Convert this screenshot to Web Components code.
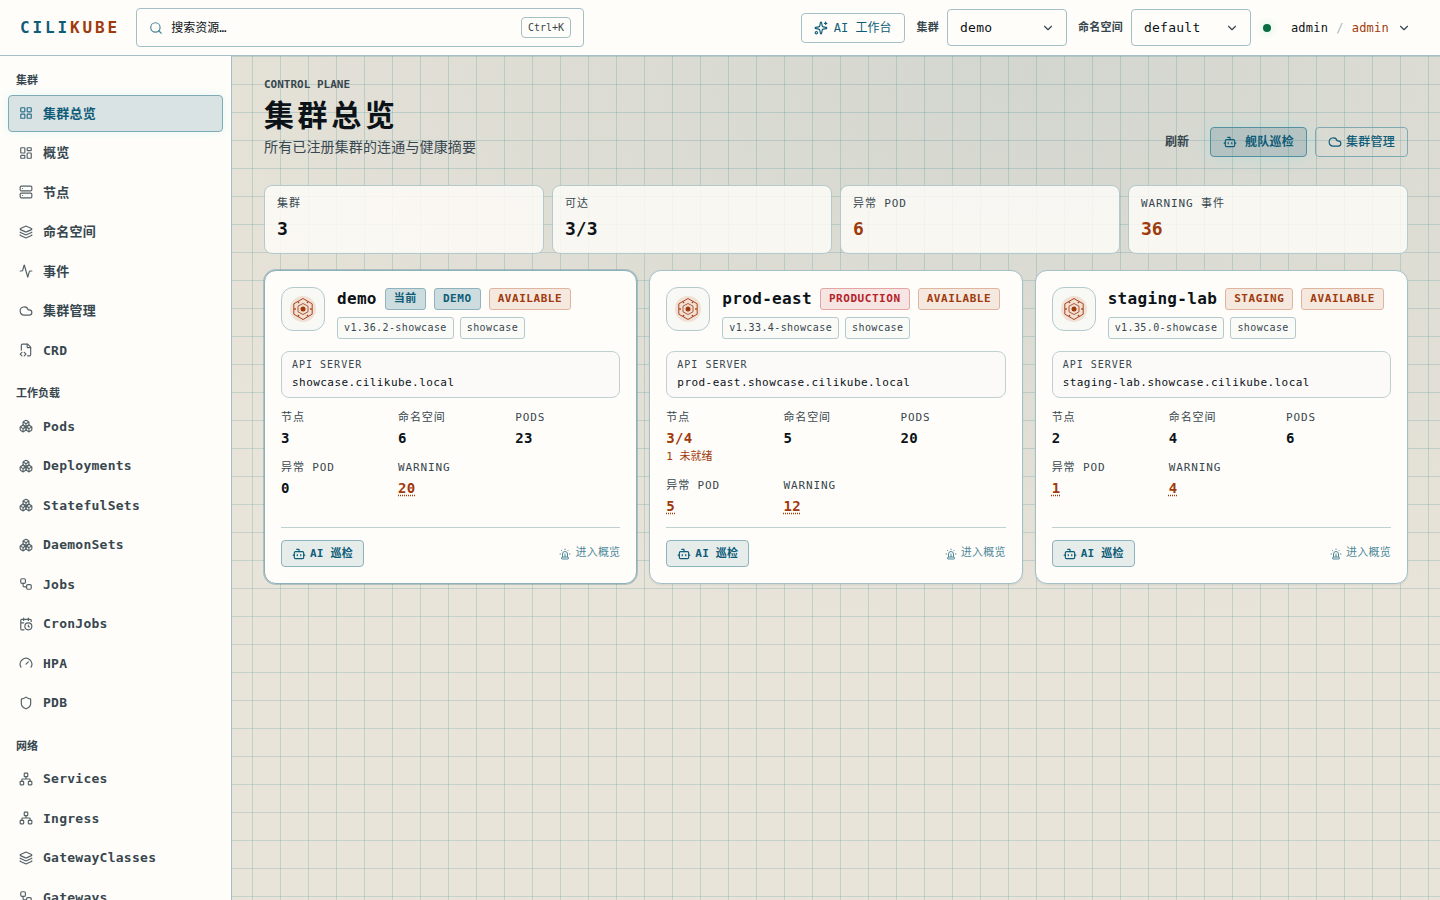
<!DOCTYPE html>
<html lang="zh-CN">
<head>
<meta charset="utf-8">
<title>CiliKube · 集群总览</title>
<meta name="viewport" content="width=device-width, initial-scale=1">
<style>
:root {
  --teal: #0e5c78;
  --rust: #9f3a0c;
  --red: #b4232a;
  --ink: #0b1218;
  --body: #37474f;
  --paper: #fffdf9;
  --line: #a3c0c7;
  --line-soft: #c0d0d2;
}
* { box-sizing: border-box; }
body {
  margin: 0;
  min-height: 100vh;
  font: 12px/1.5 "DejaVu Sans Mono", "Noto Sans CJK SC", monospace;
  color: var(--ink);
  background:
    linear-gradient(rgba(14, 110, 125, .17) 1px, transparent 1px) 0 0 / 28px 28px,
    linear-gradient(90deg, rgba(14, 110, 125, .17) 1px, transparent 1px) 0 0 / 28px 28px,
    radial-gradient(ellipse 70% 64% at 72% 8%, rgba(14, 92, 120, .1), transparent) no-repeat,
    #e9e4d9;
}
</style>
</head>
<body>
<cili-app></cili-app>

<script>
const BASE = '*{box-sizing:border-box}button,input,select{font:inherit;color:inherit;margin:0}a{color:inherit;text-decoration:none}';

class Base extends HTMLElement {
  connectedCallback() {
    if (this.shadowRoot) return;
    this.attachShadow({ mode: 'open' }).innerHTML = `<style>${BASE}${this.css()}</style>${this.html()}`;
  }
  attr(name) { return this.getAttribute(name) || ''; }
  css() { return ':host{display:block}'; }
  html() { return '<slot></slot>'; }
}

const ICONS = {
  search: '<circle cx="11" cy="11" r="8"/><path d="m21 21-4.3-4.3"/>',
  down: '<path d="m6 9 6 6 6-6"/>',
  sparkles: '<path d="M11.017 2.814a1 1 0 0 1 1.966 0l1.051 5.558a2 2 0 0 0 1.594 1.594l5.558 1.051a1 1 0 0 1 0 1.966l-5.558 1.051a2 2 0 0 0-1.594 1.594l-1.051 5.558a1 1 0 0 1-1.966 0l-1.051-5.558a2 2 0 0 0-1.594-1.594l-5.558-1.051a1 1 0 0 1 0-1.966l5.558-1.051a2 2 0 0 0 1.594-1.594z"/><path d="M20 2v4M22 4h-4"/><circle cx="4" cy="20" r="2"/>',
  grid: '<rect width="7" height="7" x="3" y="3" rx="1"/><rect width="7" height="7" x="14" y="3" rx="1"/><rect width="7" height="7" x="14" y="14" rx="1"/><rect width="7" height="7" x="3" y="14" rx="1"/>',
  dashboard: '<rect width="7" height="9" x="3" y="3" rx="1"/><rect width="7" height="5" x="14" y="3" rx="1"/><rect width="7" height="9" x="14" y="12" rx="1"/><rect width="7" height="5" x="3" y="16" rx="1"/>',
  server: '<rect width="20" height="8" x="2" y="2" rx="2"/><rect width="20" height="8" x="2" y="14" rx="2"/><path d="M6 6h.01M6 18h.01"/>',
  layers: '<path d="M12.83 2.18a2 2 0 0 0-1.66 0L2.6 6.08a1 1 0 0 0 0 1.83l8.58 3.91a2 2 0 0 0 1.66 0l8.58-3.9a1 1 0 0 0 0-1.83z"/><path d="M2 12a1 1 0 0 0 .58.91l8.6 3.91a2 2 0 0 0 1.65 0l8.58-3.9A1 1 0 0 0 22 12"/><path d="M2 17a1 1 0 0 0 .58.91l8.6 3.91a2 2 0 0 0 1.65 0l8.58-3.9A1 1 0 0 0 22 17"/>',
  activity: '<path d="M22 12h-2.48a2 2 0 0 0-1.93 1.46l-2.35 8.36a.25.25 0 0 1-.48 0L9.24 2.18a.25.25 0 0 0-.48 0l-2.35 8.36A2 2 0 0 1 4.49 12H2"/>',
  cloud: '<path d="M17.5 19H9a7 7 0 1 1 6.71-9h1.79a4.5 4.5 0 1 1 0 9Z"/>',
  filecode: '<path d="M4 12.15V4a2 2 0 0 1 2-2h8a2.4 2.4 0 0 1 1.706.706l3.588 3.588A2.4 2.4 0 0 1 20 8v12a2 2 0 0 1-2 2h-3.35"/><path d="M14 2v5a1 1 0 0 0 1 1h5"/><path d="m5 16-3 3 3 3M9 22l3-3-3-3"/>',
  boxes: '<path d="M2.97 12.92A2 2 0 0 0 2 14.63v3.24a2 2 0 0 0 .97 1.71l3 1.8a2 2 0 0 0 2.06 0L12 19v-5.5l-5-3-4.03 2.42Z"/><path d="m7 16.5-4.74-2.85M7 16.5l5-3M7 16.5v5.17"/><path d="M12 13.5V19l3.97 2.38a2 2 0 0 0 2.06 0l3-1.8a2 2 0 0 0 .97-1.71v-3.24a2 2 0 0 0-.97-1.71L17 10.5l-5 3Z"/><path d="m17 16.5-5-3M17 16.5l4.74-2.85M17 16.5v5.17"/><path d="M7.97 4.42A2 2 0 0 0 7 6.13v4.37l5 3 5-3V6.13a2 2 0 0 0-.97-1.71l-3-1.8a2 2 0 0 0-2.06 0l-3 1.8Z"/><path d="M12 8 7.26 5.15M12 8l4.74-2.85M12 13.5V8"/>',
  workflow: '<rect width="8" height="8" x="3" y="3" rx="2"/><path d="M7 11v4a2 2 0 0 0 2 2h4"/><rect width="8" height="8" x="13" y="13" rx="2"/>',
  calendar: '<path d="M16 14v2.2l1.6 1M16 2v4"/><path d="M21 7.5V6a2 2 0 0 0-2-2H5a2 2 0 0 0-2 2v14a2 2 0 0 0 2 2h3.5M3 10h5M8 2v4"/><circle cx="16" cy="16" r="6"/>',
  gauge: '<path d="m12 14 4-4M3.34 19a10 10 0 1 1 17.32 0"/>',
  shield: '<path d="M20 13c0 5-3.5 7.5-7.66 8.95a1 1 0 0 1-.67-.01C7.5 20.5 4 18 4 13V6a1 1 0 0 1 1-1c2 0 4.5-1.2 6.24-2.72a1.17 1.17 0 0 1 1.52 0C14.51 3.81 17 5 19 5a1 1 0 0 1 1 1z"/>',
  network: '<rect x="16" y="16" width="6" height="6" rx="1"/><rect x="2" y="16" width="6" height="6" rx="1"/><rect x="9" y="2" width="6" height="6" rx="1"/><path d="M5 16v-3a1 1 0 0 1 1-1h12a1 1 0 0 1 1 1v3M12 12V8"/>',
  bot: '<path d="M12 8V4H8"/><rect width="16" height="12" x="4" y="8" rx="2"/><path d="M2 14h2M20 14h2M15 13v2M9 13v2"/>',
  siren: '<path d="M7 18v-6a5 5 0 1 1 10 0v6"/><path d="M5 21a1 1 0 0 0 1 1h12a1 1 0 0 0 1-1v-1a2 2 0 0 0-2-2H7a2 2 0 0 0-2 2z"/><path d="M21 12h1M18.5 4.5 18 5M2 12h1M12 2v1M4.929 4.929l.707.707M12 12v6"/>'
};

customElements.define('ui-icon', class extends Base {
  css() { return ':host{display:block;flex:none;width:14px;height:14px}svg{display:block;width:100%;height:100%}'; }
  html() {
    return `<svg viewBox="0 0 24 24" fill="none" stroke="currentColor" stroke-width="${this.attr('weight') || 2}" stroke-linecap="round" stroke-linejoin="round" aria-hidden="true">${ICONS[this.attr('name')]}</svg>`;
  }
});

customElements.define('ui-button', class extends Base {
  css() {
    return `:host{display:block}
    button{display:flex;align-items:center;justify-content:center;gap:6px;height:30px;padding:0 12px;border:1px solid #7fa9b3;border-radius:4px;background:none;color:var(--teal);font-size:12px;line-height:18px;white-space:nowrap}
    .plain{border-color:transparent;color:var(--body);font-weight:700}
    .primary{background:rgba(14,92,120,.18);border-color:#5590a0;font-weight:700;gap:8px;letter-spacing:.02em;box-shadow:0 0 16px rgba(120,225,230,.28)}
    .outline{gap:4px;font-weight:500;letter-spacing:.02em}
    .soft{height:27px;padding:0 10px;gap:4px;font-size:11px;font-weight:700;letter-spacing:.02em;background:#e6ecea;border-color:#8fb3bd}
    .top{border-color:var(--line)}`;
  }
  html() { return `<button type="button" class="${this.attr('kind')}"><slot></slot></button>`; }
});

customElements.define('ui-select', class extends Base {
  css() {
    return `:host{display:flex;align-items:center;gap:8px}
    label{padding-top:2px;font-size:11px;font-weight:700;letter-spacing:.02em;color:var(--body);white-space:nowrap}
    .box{position:relative;display:flex;align-items:center}
    select{appearance:none;width:120px;height:37px;padding:0 36px 0 12px;border:1px solid var(--line);border-radius:4px;background:var(--paper);font-size:13px;letter-spacing:.02em;color:var(--ink)}
    ui-icon{position:absolute;right:12px;color:var(--body);pointer-events:none}`;
  }
  html() {
    return `<label for="s">${this.attr('label')}</label><div class="box"><select id="s"><option>${this.attr('value')}</option></select><ui-icon name="down"></ui-icon></div>`;
  }
});

customElements.define('app-topbar', class extends Base {
  css() {
    return `:host{position:sticky;top:0;z-index:2;display:flex;align-items:center;height:56px;padding:0 29px 0 20px;background:var(--paper);border-bottom:1px solid var(--line)}
    .logo{font-size:16px;line-height:24px;font-weight:700;letter-spacing:.18em;color:var(--teal);margin-right:16px}
    .logo span{color:var(--rust)}
    .search{flex:0 1 448px;display:flex;align-items:center;gap:8px;height:39px;padding:0 12px;border:1px solid var(--line);border-radius:4px;color:var(--ink)}
    .search ui-icon{color:#4a8799}
    .search input{flex:1;min-width:0;border:0;padding:0;background:none;outline:0;font-size:12px}
    .search input::placeholder{color:var(--ink);opacity:1}
    kbd{font:10px/19px "DejaVu Sans Mono",monospace;padding:0 6px;border:1px solid var(--line);border-radius:4px;color:var(--body)}
    .right{margin-left:auto;display:flex;align-items:center;gap:12px}
    ui-select+ui-select{margin-left:-1px}
    .dot{width:8px;height:8px;border-radius:4px;background:#0b6b43;box-shadow:0 0 8px rgba(60,220,150,.4)}
    .user{display:flex;align-items:center;gap:8px;padding:0 0 0 8px;border:0;background:none;font-size:12px;letter-spacing:.02em}
    .user i{font-style:normal;color:#9fbcc4}
    .user b{font-weight:400;color:var(--rust)}
    .user ui-icon{color:var(--body)}`;
  }
  html() {
    return `<div class="logo">CILI<span>KUBE</span></div>
    <div class="search"><ui-icon name="search"></ui-icon><input type="text" aria-label="搜索资源" placeholder="搜索资源…"><kbd>Ctrl+K</kbd></div>
    <div class="right">
      <ui-button kind="top"><ui-icon name="sparkles"></ui-icon>AI 工作台</ui-button>
      <ui-select label="集群" value="demo"></ui-select>
      <ui-select label="命名空间" value="default"></ui-select>
      <span class="dot"></span>
      <button class="user" type="button"><span>admin</span><i>/</i><b>admin</b><ui-icon name="down"></ui-icon></button>
    </div>`;
  }
});

customElements.define('nav-item', class extends Base {
  css() {
    return `:host{display:block}
    a{display:flex;align-items:center;gap:10px;padding:8px 10px;border:1px solid transparent;border-radius:4px;font-size:13px;line-height:1.5;font-weight:700;letter-spacing:.02em;color:var(--body)}
    :host([active]) a{color:var(--teal);background:#dae3e4;border-color:#7fabb6;box-shadow:0 0 12px rgba(120,225,230,.2)}
    ui-icon{opacity:.85}`;
  }
  html() {
    return `<a href="#"${this.hasAttribute('active') ? ' aria-current="page"' : ''}><ui-icon name="${this.attr('icon')}" weight="2"></ui-icon><slot></slot></a>`;
  }
});

customElements.define('nav-section', class extends Base {
  css() {
    return `:host{display:flex;flex-direction:column;gap:2px}
    h2{margin:0 0 3px;padding:1px 8px 0;font-size:11px;line-height:1.5;font-weight:700;color:var(--body)}`;
  }
  html() { return `<h2>${this.attr('label')}</h2><slot></slot>`; }
});

const NAV = [
  ['集群', [['grid', '集群总览'], ['dashboard', '概览'], ['server', '节点'], ['layers', '命名空间'], ['activity', '事件'], ['cloud', '集群管理'], ['filecode', 'CRD']]],
  ['工作负载', [['boxes', 'Pods'], ['boxes', 'Deployments'], ['boxes', 'StatefulSets'], ['boxes', 'DaemonSets'], ['workflow', 'Jobs'], ['calendar', 'CronJobs'], ['gauge', 'HPA'], ['shield', 'PDB']]],
  ['网络', [['network', 'Services'], ['network', 'Ingress'], ['layers', 'GatewayClasses'], ['workflow', 'Gateways']]]
];

customElements.define('app-sidebar', class extends Base {
  css() {
    return `:host{position:sticky;top:56px;display:block;height:calc(100vh - 56px);overflow:auto;scrollbar-width:none;background:var(--paper);border-right:1px solid var(--line)}
    nav{display:flex;flex-direction:column;gap:16px;padding:16px 8px}`;
  }
  html() {
    return `<nav aria-label="主导航">${NAV.map(([label, items], s) =>
      `<nav-section label="${label}">${items.map(([icon, text], i) =>
        `<nav-item icon="${icon}"${s + i === 0 ? ' active' : ''}>${text}</nav-item>`).join('')}</nav-section>`).join('')}</nav>`;
  }
});

customElements.define('stat-card', class extends Base {
  css() {
    return `:host{display:block;padding:10px 12px;border:1px solid #b2cacd;border-radius:8px;background:rgba(255,253,249,.82)}
    .l{font-size:11px;line-height:16px;letter-spacing:.08em;color:var(--body)}
    .v{margin-top:3px;font-size:18px;line-height:28px;font-weight:700}
    :host([warn]) .v{color:var(--rust)}`;
  }
  html() { return `<div class="l">${this.attr('label')}</div><div class="v">${this.attr('value')}</div>`; }
});

customElements.define('ui-badge', class extends Base {
  css() {
    return `:host{display:block;height:22px;padding:0 8px;border:1px solid #8fb3bd;border-radius:3px;background:#cddcdf;color:var(--teal);font-size:11px;line-height:20px;font-weight:700;letter-spacing:.05em;white-space:nowrap}
    :host([kind=warn]){background:#f5e8df;border-color:#e0b59f;color:var(--rust)}
    :host([kind=danger]){background:#f7e5e3;border-color:#e3a6a4;color:var(--red)}
    :host([kind=chip]){padding:0 6px;background:#fafaf7;border-color:#b2cacd;color:var(--body);font-size:10px;font-weight:400;letter-spacing:.04em}`;
  }
});

customElements.define('cluster-card', class extends Base {
  css() {
    return `:host{display:flex;flex-direction:column;gap:12px;padding:16px;border:1px solid var(--line);border-radius:12px;background:var(--paper);box-shadow:0 1px 2px rgba(14,92,120,.1)}
    :host([current]){border-color:#8ab0ba;box-shadow:0 0 0 1px rgba(14,92,120,.25)}
    header{display:flex;gap:12px}
    .mark{display:grid;place-items:center;flex:none;width:44px;height:44px;border:1px solid #b2cacd;border-radius:12px;background:#f8f8f5}
    .mark svg{width:26px;height:26px}
    .row{display:flex;align-items:center;gap:8px;padding-top:1px}
    h3{margin:0;font-size:16px;line-height:22px;font-weight:700;letter-spacing:.02em;white-space:nowrap}
    .chips{display:flex;gap:6px;margin-top:7px}
    .api{padding:6px 10px;border:1px solid var(--line-soft);border-radius:8px;background:#fbfaf8}
    .k{font-size:10px;line-height:14px;letter-spacing:.1em;color:var(--body)}
    .u{margin-top:3px;font-size:11px;line-height:16px;letter-spacing:.04em}
    dl{display:grid;grid-template-columns:repeat(3,1fr);gap:13px 12px;margin:0}
    dt{font-size:11px;line-height:15px;letter-spacing:.08em;color:var(--body)}
    dd{margin:4px 0 0;font-size:14px;line-height:18px;font-weight:700;letter-spacing:.02em}
    dd.w{color:var(--rust)}
    dd.s{margin-top:2px;font-size:11px;line-height:16px;font-weight:400;letter-spacing:0;color:var(--rust)}
    dd a{text-decoration:underline dotted;text-underline-offset:2px}
    footer{display:flex;align-items:center;justify-content:space-between;margin-top:auto;padding-top:12px;border-top:1px solid var(--line-soft)}
    .go{display:flex;align-items:center;gap:4px;font-size:11px;letter-spacing:.02em;color:#4f899b}
    .go ui-icon{width:12px;height:12px}`;
  }
  html() {
    const d = CLUSTERS[this.attr('name')];
    const meta = (k, v, link, warn, sub) => `<div><dt>${k}</dt><dd class="${warn ? 'w' : ''}">${link ? `<a href="#">${v}</a>` : v}</dd>${sub ? `<dd class="s">${sub}</dd>` : ''}</div>`;
    return `<header>
      <div class="mark"><svg viewBox="0 0 26 26" fill="none" stroke="#a8481c" aria-hidden="true"><circle cx="13" cy="13" r="13" fill="#f1e0d6" stroke="none"/><path d="M13 2.500 22.200 7.800v10.400L13 23.500 3.800 18.200V7.800Z"/><path d="m13 7.500 5 2.700v5.600l-5 2.700-5-2.700v-5.600Z" stroke-width=".9"/><g fill="#a8481c" stroke="none"><circle cx="8.500" cy="6.300" r=".9"/><circle cx="17.500" cy="6.300" r=".9"/><circle cx="8.500" cy="19.700" r=".9"/><circle cx="17.500" cy="19.700" r=".9"/><circle cx="5" cy="13" r=".9"/><circle cx="21" cy="13" r=".9"/></g><circle cx="13" cy="13" r="2.500" fill="#9f3a0c" stroke="none"/></svg></div>
      <div><div class="row"><h3>${this.attr('name')}</h3>${d.badges.map(([k, t]) => `<ui-badge kind="${k}">${t}</ui-badge>`).join('')}</div>
      <div class="chips"><ui-badge kind="chip">${d.version}-showcase</ui-badge><ui-badge kind="chip">showcase</ui-badge></div></div>
    </header>
    <div class="api"><div class="k">API SERVER</div><div class="u">${d.url}</div></div>
    <dl>${meta('节点', d.nodes, false, d.sub, d.sub)}${meta('命名空间', d.ns)}${meta('PODS', d.pods)}${meta('异常 POD', d.bad, d.bad > 0, d.bad > 0)}${meta('WARNING', d.warn, true, true)}</dl>
    <footer><ui-button kind="soft"><ui-icon name="bot"></ui-icon>AI 巡检</ui-button><a class="go" href="#"><ui-icon name="siren"></ui-icon>进入概览</a></footer>`;
  }
});

const CLUSTERS = {
  'demo': { badges: [['info', '当前'], ['info', 'DEMO'], ['warn', 'AVAILABLE']], version: 'v1.36.2', url: 'showcase.cilikube.local', nodes: '3', ns: 6, pods: 23, bad: 0, warn: 20 },
  'prod-east': { badges: [['danger', 'PRODUCTION'], ['warn', 'AVAILABLE']], version: 'v1.33.4', url: 'prod-east.showcase.cilikube.local', nodes: '3/4', sub: '1 未就绪', ns: 5, pods: 20, bad: 5, warn: 12 },
  'staging-lab': { badges: [['warn', 'STAGING'], ['warn', 'AVAILABLE']], version: 'v1.35.0', url: 'staging-lab.showcase.cilikube.local', nodes: '2', ns: 4, pods: 6, bad: 1, warn: 4 }
};

customElements.define('page-header', class extends Base {
  css() {
    return `:host{display:flex;justify-content:space-between;align-items:flex-end}
    .eyebrow{padding-top:1px;font-size:11px;line-height:16px;font-weight:700;color:var(--body)}
    h1{margin:3px 0 0;font-size:30px;line-height:40px;font-weight:700;letter-spacing:.12em}
    p{margin:0;font-size:14px;line-height:22px;letter-spacing:.01em;color:var(--body)}
    .actions{display:flex;gap:8px;padding-bottom:1px}`;
  }
  html() {
    return `<div><div class="eyebrow">CONTROL PLANE</div><h1>集群总览</h1><p>所有已注册集群的连通与健康摘要</p></div>
    <div class="actions"><ui-button kind="plain">刷新</ui-button><ui-button kind="primary"><ui-icon name="bot"></ui-icon>舰队巡检</ui-button><ui-button kind="outline"><ui-icon name="cloud"></ui-icon>集群管理</ui-button></div>`;
  }
});

customElements.define('cili-app', class extends Base {
  css() {
    return `:host{display:block}
    .shell{display:grid;grid-template-columns:232px minmax(0,1fr);align-items:start}
    main{padding:20px 32px 32px}
    .stats{display:grid;grid-template-columns:repeat(4,1fr);gap:8px;margin-top:27px}
    .cards{display:grid;grid-template-columns:repeat(3,1fr);gap:12px;margin-top:16px}`;
  }
  html() {
    return `<app-topbar></app-topbar><div class="shell"><app-sidebar></app-sidebar><main>
      <page-header></page-header>
      <section class="stats"><stat-card label="集群" value="3"></stat-card><stat-card label="可达" value="3/3"></stat-card><stat-card warn label="异常 POD" value="6"></stat-card><stat-card warn label="WARNING 事件" value="36"></stat-card></section>
      <section class="cards"><cluster-card name="demo" current></cluster-card><cluster-card name="prod-east"></cluster-card><cluster-card name="staging-lab"></cluster-card></section>
    </main></div>`;
  }
});
</script>
</body>
</html>
